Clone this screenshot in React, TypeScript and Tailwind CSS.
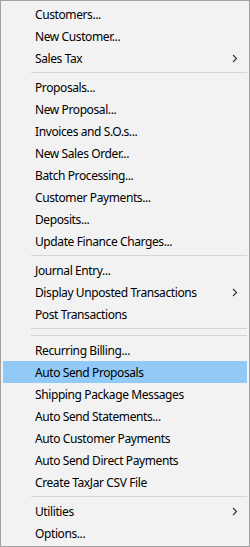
import React from 'react';

type Entry = { label: string; sub?: boolean; active?: boolean } | 'sep';

const entries: Entry[] = [
  { label: 'Customers...' },
  { label: 'New Customer...' },
  { label: 'Sales Tax', sub: true },
  'sep',
  { label: 'Proposals...' },
  { label: 'New Proposal...' },
  { label: 'Invoices and S.O.s...' },
  { label: 'New Sales Order...' },
  { label: 'Batch Processing...' },
  { label: 'Customer Payments...' },
  { label: 'Deposits...' },
  { label: 'Update Finance Charges...' },
  'sep',
  { label: 'Journal Entry...' },
  { label: 'Display Unposted Transactions', sub: true },
  { label: 'Post Transactions' },
  'sep',
  'sep',
  { label: 'Recurring Billing...' },
  { label: 'Auto Send Proposals', active: true },
  { label: 'Shipping Package Messages' },
  { label: 'Auto Send Statements...' },
  { label: 'Auto Customer Payments' },
  { label: 'Auto Send Direct Payments' },
  { label: 'Create TaxJar CSV File' },
  'sep',
  { label: 'Utilities', sub: true },
  { label: 'Options...' },
];

function Chevron() {
  return (
    <svg width="6" height="9" viewBox="0 0 6 9" className="shrink-0">
      <path d="M1 1 L4.5 4.5 L1 8" fill="none" stroke="#333" strokeWidth="1.1" />
    </svg>
  );
}

export default function App() {
  return (
    <div className="w-[250px] h-[547px] border border-[#a0a0a0] bg-[#f2f2f2] p-[2px] font-['Segoe_UI','Noto_Sans',sans-serif] text-[12px] tracking-[-0.4px] text-black">
      {entries.map((e, i) =>
        e === 'sep' ? (
          <div key={i} className="h-[7px] pt-[3px] pl-[28px]">
            <div className="h-px bg-[#d4d4d4]" />
          </div>
        ) : (
          <div
            key={i}
            className={`flex h-[22px] items-center pl-[32px] pr-[9px] ${e.active ? 'bg-[#91c9f7]' : ''}`}
          >
            <span className="flex-1 leading-none pt-px">{e.label}</span>
            {e.sub && <Chevron />}
          </div>
        )
      )}
    </div>
  );
}
